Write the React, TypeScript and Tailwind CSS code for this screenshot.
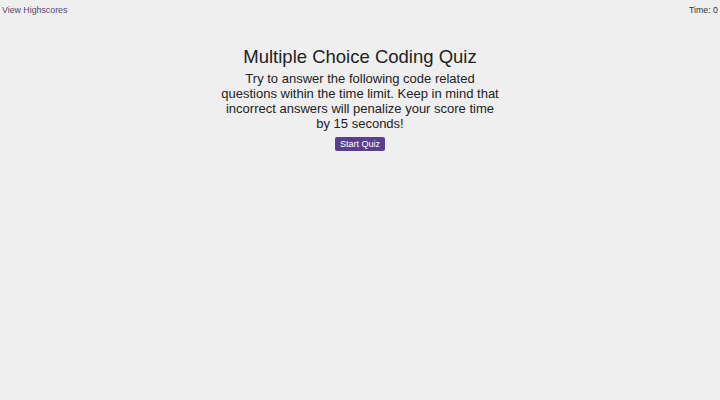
export default function App() {
  return (
    <div className="w-[720px] h-[400px] bg-[#efefef] text-[#222] flex flex-col" style={{ fontFamily: '"Liberation Sans", Arial, sans-serif' }}>
      <div className="flex justify-between items-start px-[2px] pt-[4px] text-[8.8px] leading-[12px]">
        <a className="text-[#55466f]">View Highscores</a>
        <span className="text-[#333]">Time: 0</span>
      </div>
      <div className="flex flex-col items-center mt-[29px]">
        <h1 className="text-[18.5px] leading-[24px] text-[#222]">Multiple Choice Coding Quiz</h1>
        <p className="w-[284px] text-center text-[13px] leading-[15px] mt-[2px] text-[#222]">
          Try to answer the following code related questions within the time limit. Keep in mind that incorrect answers will penalize your score time by 15 seconds!
        </p>
        <button className="mt-[6px] bg-[#5b3f8c] text-white text-[9px] leading-[14px] px-[5px] rounded-[2px]">Start Quiz</button>
      </div>
    </div>
  );
}
